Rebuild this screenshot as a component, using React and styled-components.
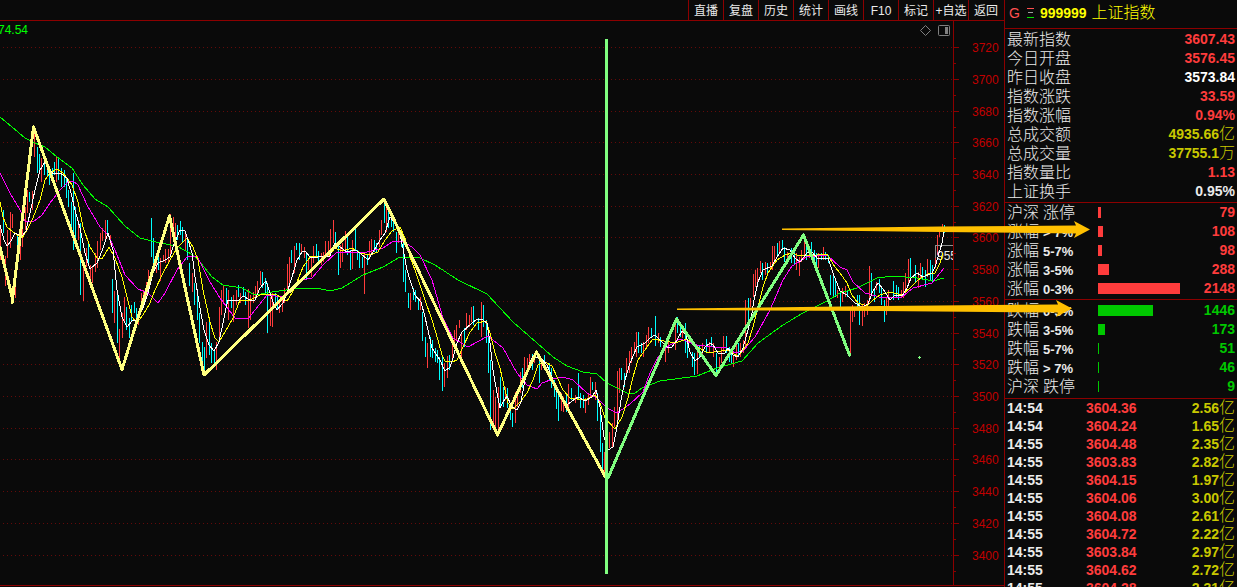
import styled, { createGlobalStyle } from "styled-components";

const sans = `"Liberation Sans", "Noto Sans CJK SC", sans-serif`;

const colors = {
  bg: "#0a0a0a",
  line: "#8c0000",
  grid: "#640a0a",
  axis: "#c00000",
  red: "#ff3c3c",
  green: "#00c800",
  yellow: "#c8c800",
  white: "#ebebeb"
};

const GlobalStyle = createGlobalStyle`
  * {
    box-sizing: border-box;
  }
  body {
    margin: 0;
    background: ${colors.bg};
    font-family: ${sans};
  }
`;

const Screen = styled.div`
  position: relative;
  display: flex;
  height: 100vh;
  overflow: hidden;
`;

const Main = styled.main`
  flex: 1;
  min-width: 0;
`;

const Toolbar = styled.nav`
  display: flex;
  justify-content: flex-end;
  padding-right: 1px;
  border-bottom: 1px solid ${colors.line};
`;

const ToolButton = styled.button`
  width: 35px;
  height: 20px;
  padding: 2px 0 0;
  border: 0;
  border-left: 1px solid ${colors.line};
  background: none;
  color: ${colors.white};
  font-family: ${sans};
  font-size: 12px;
  line-height: 18px;
  white-space: nowrap;
`;

const ChartSvg = styled.svg`
  display: block;
  width: 100%;
  font-family: ${sans};
  font-size: 12px;
`;

const Side = styled.aside`
  width: 233px;
  flex: none;
  overflow: hidden;
  border-left: 1px solid ${colors.line};
`;

const Header = styled.header`
  display: flex;
  align-items: center;
  gap: 5px;
  height: 28px;
  padding: 0 0 2px 4px;
  color: #ffff00;
  font-size: 14px;
`;

const Flag = styled.span`
  color: #ff5050;
`;

const Code = styled.strong`
  font-weight: bold;
`;

const Name = styled.h1`
  margin: 0;
  font-size: 16px;
  font-weight: 300;
  line-height: 18px;
`;

const Section = styled.section`
  padding: ${p => p.$pad || "0"};
  border-top: 1px solid ${colors.line};
`;

const Table = styled.table`
  width: 100%;
  table-layout: fixed;
  border-spacing: 0;
  color: ${colors.white};
  font-size: 14px;
  line-height: ${p => p.$row}px;

  th,
  td {
    height: ${p => p.$row}px;
    padding: 0;
    white-space: nowrap;
  }
`;

const Label = styled.th`
  width: ${p => p.$width};
  && {
    padding-left: 2px;
  }
  font-size: 16px;
  font-weight: 300;
  text-align: left;
`;

const Range = styled.span`
  margin-left: 4px;
  font-size: ${p => (p.$cjk ? 16 : 13)}px;
  font-weight: ${p => (p.$cjk ? 300 : "bold")};
  line-height: 1;
`;

const Time = styled.td`
  width: 81px;
  && {
    padding-left: 2px;
  }
  font-weight: bold;
`;

const Value = styled.td`
  && {
    padding-right: 2px;
  }
  color: ${p => p.$color};
  font-weight: bold;
  text-align: ${p => p.$align || "right"};
`;

const Unit = styled.span`
  font-size: 16px;
  font-weight: 300;
  line-height: 1;
`;

const BarCell = styled.td`
  width: 84px;
`;

const Bar = styled.div`
  height: 11px;
  background: ${p => p.$color};
`;

const Annotations = styled.svg`
  position: absolute;
  top: 0;
  left: 0;
  width: 100%;
  pointer-events: none;
`;

const tools = ["直播", "复盘", "历史", "统计", "画线", "F10", "标记", "+自选", "返回"];

const quotes = [
  ["最新指数", "3607.43", colors.red],
  ["今日开盘", "3576.45", colors.red],
  ["昨日收盘", "3573.84", "#ffffff"],
  ["指数涨跌", "33.59", colors.red],
  ["指数涨幅", "0.94%", colors.red],
  ["总成交额", "4935.66", colors.yellow, "亿"],
  ["总成交量", "37755.1", colors.yellow, "万"],
  ["指数量比", "1.13", colors.red],
  ["上证换手", "0.95%", colors.white]
];

// label, range, count, bar width
const rising = [
  ["沪深", "涨停", 79, 3],
  ["涨幅", "> 7%", 108, 5],
  ["涨幅", "5-7%", 98, 4],
  ["涨幅", "3-5%", 288, 11],
  ["涨幅", "0-3%", 2148, 82]
];

const falling = [
  ["跌幅", "0-3%", 1446, 55],
  ["跌幅", "3-5%", 173, 7],
  ["跌幅", "5-7%", 51, 1],
  ["跌幅", "> 7%", 46, 1],
  ["沪深", "跌停", 9, 1]
];

const ticks = [
  ["14:54", "3604.36", "2.56"],
  ["14:54", "3604.24", "1.65"],
  ["14:55", "3604.48", "2.35"],
  ["14:55", "3603.83", "2.82"],
  ["14:55", "3604.15", "1.97"],
  ["14:55", "3604.06", "3.00"],
  ["14:55", "3604.08", "2.61"],
  ["14:55", "3604.72", "2.22"],
  ["14:55", "3603.84", "2.97"],
  ["14:55", "3604.62", "2.72"],
  ["14:55", "3604.28", "2.31"]
];

const gridYs = [47, 79, 111, 142, 174, 206, 237, 269, 301, 333, 364, 396, 428, 459, 491, 523, 555];

// x,high,low
const upBars =
  "0,227,260 5,256,286 7,230,258 10,212,248 12,214,228 15,268,298 20,227,260 22,222,247 25,207,230 27,190,213 32,191,210 34,133,157 41,158,182 56,156,182 78,220,240 83,265,301 86,248,267 90,265,280 92,267,283 95,253,272 97,241,268 100,233,250 102,228,241 105,220,240 110,235,245 114,291,323 119,329,358 122,313,338 124,297,322 138,312,325 141,293,310 143,290,303 146,282,298 148,270,283 156,257,273 160,258,281 163,255,262 165,249,263 168,249,263 170,214,255 173,217,237 175,223,243 185,232,250 192,273,292 206,322,358 216,342,370 219,307,340 " +
  "221,290,315 223,286,303 228,290,320 233,295,322 236,290,305 240,293,303 248,289,328 250,295,320 253,292,303 255,286,300 257,281,295 260,271,285 270,297,326 272,293,327 279,300,313 282,297,312 284,288,303 287,264,295 289,257,287 294,246,273 301,244,252 304,247,258 308,258,270 311,257,277 313,246,263 321,253,265 323,252,262 325,241,257 328,241,257 330,229,252 333,220,243 340,245,268 342,243,262 345,231,250 352,240,269 364,253,294 369,241,258 371,239,255 379,230,247 381,220,235 386,207,232 398,228,243 " +
  "410,293,310 420,297,310 427,343,368 444,363,387 447,356,378 452,337,360 454,330,347 456,325,340 459,320,328 461,332,357 466,313,330 469,315,327 471,307,322 481,302,337 493,390,427 495,397,427 498,387,433 505,387,400 515,392,423 517,390,407 520,372,393 524,357,380 527,358,373 529,354,367 534,353,363 541,360,370 561,393,411 563,397,412 568,384,407 575,395,403 585,398,413 588,393,405 590,377,397 595,382,400 604,452,476 609,432,448 612,423,447 614,407,427 617,371,423 619,368,393 626,358,377 629,351,373 " +
  "631,347,363 634,342,353 636,332,357 643,342,357 646,335,348 648,327,343 658,333,343 665,343,362 668,342,353 675,320,350 682,325,338 697,350,374 702,343,357 709,342,353 713,343,357 719,357,373 721,347,363 723,336,352 733,355,367 736,343,360 740,343,357 743,340,353 745,300,347 750,298,307 753,274,297 755,270,287 757,268,285 760,261,273 765,262,275 770,262,268 772,246,270 774,246,263 779,241,253 787,252,263 796,253,270 799,257,276 801,250,262 804,237,258 809,248,258 818,253,268 823,247,260 837,290,298 842,288,302 845,286,297 " +
  "850,310,355 852,305,322 854,307,317 862,305,326 864,303,317 867,300,315 869,266,302 876,282,290 886,298,315 888,290,307 901,290,298 903,282,298 905,273,290 908,259,285 918,272,288 920,263,278 927,259,277 935,245,268 937,235,255 939,227,237 942,224,232";

const downBars =
  "3,210,233 17,235,270 29,192,202 37,147,173 39,154,170 44,158,175 47,163,177 49,172,185 52,168,177 54,162,175 58,157,180 61,168,187 64,170,187 66,178,198 68,190,207 71,202,232 73,173,250 75,207,247 80,223,295 88,243,263 107,220,235 112,279,313 117,293,343 126,307,330 129,318,338 131,305,322 134,302,313 136,308,323 151,218,257 153,238,263 158,250,270 177,225,240 180,221,235 182,227,242 187,237,260 189,263,286 194,283,305 197,292,320 199,313,343 202,342,370 204,347,372 209,322,355 211,343,363 214,350,363 " +
  "226,288,305 231,297,308 238,285,297 243,287,297 245,292,305 262,272,288 265,278,295 267,283,333 275,293,305 277,297,310 291,250,263 296,243,250 299,243,260 306,253,280 316,244,258 318,251,262 335,232,245 338,243,275 347,237,255 350,250,270 355,229,250 357,250,260 359,252,268 362,257,268 367,255,265 374,240,252 376,243,253 384,200,223 388,212,228 391,217,227 393,217,232 396,232,253 401,235,247 403,242,282 405,270,292 408,293,308 413,288,300 415,290,302 418,300,310 " +
  "422,312,341 425,337,357 430,337,357 432,340,358 435,348,362 437,350,363 439,357,380 442,357,391 449,355,370 464,328,347 473,306,325 478,318,330 483,305,327 486,320,343 488,327,373 490,360,430 500,377,407 503,387,407 507,388,408 510,405,420 512,413,427 522,368,388 532,354,370 539,360,383 544,355,370 549,363,380 551,368,388 554,380,397 556,387,409 558,393,421 566,395,412 571,388,400 578,373,400 580,393,408 583,395,408 592,382,390 597,393,421 600,413,452 602,443,470 621,368,380 624,373,387 " +
  "638,332,353 641,343,353 651,328,338 655,316,346 660,337,347 677,317,333 680,325,337 685,323,353 687,343,358 692,352,367 694,353,375 699,345,357 706,339,353 711,337,347 716,353,373 726,336,353 729,347,362 731,350,363 738,343,357 748,298,323 762,263,280 767,263,273 777,243,257 782,240,250 784,247,262 791,248,263 794,252,265 806,240,260 811,242,260 814,250,262 816,253,267 821,253,260 825,252,260 828,255,263 830,275,295 833,275,297 835,278,297 840,292,307 847,290,297 " +
  "857,295,310 859,295,325 871,273,293 874,290,302 879,279,293 881,287,305 884,300,322 893,281,300 896,285,298 898,287,300 910,258,280 915,265,282 922,267,280 925,270,287 930,260,280 932,265,282 944,225,233";

const averages = [
  {
    color: "#00ff00",
    points:
      "0,117 12,127 25,138 35,143 45,147 57,157 72,168 83,185 95,199 108,207 125,226 140,238 160,243 177,246 193,255 200,262 212,277 223,285 242,288 255,295 272,292 300,288 317,288 330,291 342,288 363,275 383,267 400,257 420,258 435,265 458,280 487,294 513,322 537,343 553,357 567,366 583,372 597,374 607,383 627,393 635,393 642,388 660,381 697,376 717,368 742,361 758,343 783,325 803,313 827,301 840,293 857,288 877,278 893,276 917,278 933,281 944,278"
  },
  {
    color: "#ff00ff",
    points:
      "0,173 10,193 20,210 25,221 33,222 42,215 50,203 60,190 68,182 73,181 78,185 87,205 100,227 108,235 115,250 125,275 138,289 148,293 158,303 165,293 177,270 187,257 197,256 200,262 210,282 220,298 235,318 248,319 255,310 267,295 283,297 293,288 302,280 312,278 323,265 337,252 357,252 367,252 383,248 392,242 402,241 412,247 420,255 432,280 443,318 453,338 468,347 488,336 503,348 517,373 527,385 537,389 542,383 553,379 563,377 573,380 587,393 597,398 607,408 617,413 630,404 643,392 650,373 658,357 667,347 680,339 697,345 713,347 727,348 735,353 743,351 755,337 770,310 783,280 792,266 807,257 827,255 840,267 847,270 853,282 865,293 883,298 902,297 913,288 932,283 944,268"
  },
  {
    color: "#ffff00",
    points:
      "0,202 3,217 7,227 13,232 22,238 27,230 33,218 40,200 45,180 50,173 57,169 63,173 72,185 78,202 83,227 90,247 97,258 102,259 109,247 115,258 122,277 127,297 132,317 137,323 143,315 150,303 155,290 163,273 170,260 177,248 187,238 193,247 198,260 203,290 210,322 215,338 219,342 225,332 233,318 240,300 250,300 260,295 275,294 287,301 292,293 297,282 303,267 310,257 320,256 328,257 335,248 342,251 352,248 360,253 370,255 378,252 385,240 392,231 400,227 405,238 410,257 415,270 425,300 432,320 438,340 442,355 445,361 452,362 457,360 463,347 470,332 477,323 486,321 490,333 495,353 500,368 505,390 508,403 513,409 520,402 527,393 533,380 538,365 545,362 552,366 557,377 563,390 570,398 585,400 595,395 600,403 605,418 615,429 622,417 628,398 633,377 638,360 647,347 653,339 675,343 687,339 697,347 708,353 727,350 738,356 743,350 748,343 753,327 758,307 763,287 768,273 777,260 785,255 792,253 800,256 817,255 827,254 835,267 840,273 847,283 852,295 858,303 867,306 873,300 880,295 890,292 902,295 910,288 918,280 928,274 935,273 940,263 943,253"
  },
  {
    color: "#ffffff",
    points:
      "0,225 4,240 7,246 11,241 15,233 22,236 26,231 30,213 35,190 40,170 45,162 49,168 53,174 60,173 67,178 71,193 75,210 80,228 85,253 90,269 97,263 102,251 108,233 113,250 117,290 122,317 127,327 132,321 137,320 143,308 148,293 153,273 158,263 165,260 170,257 173,247 177,237 180,230 185,231 188,240 192,253 195,277 200,308 204,330 209,345 214,351 219,342 223,323 226,308 228,300 238,301 243,296 250,300 255,300 260,288 266,281 270,293 274,305 277,310 283,303 287,293 292,277 297,260 302,252 305,251 310,257 318,257 330,256 335,243 340,247 347,252 355,250 360,253 368,260 373,252 380,240 385,233 390,217 395,223 400,235 403,248 407,270 410,280 415,295 421,302 425,317 432,348 440,360 445,371 450,367 453,358 457,343 462,332 472,323 477,319 483,320 487,323 490,343 493,370 497,393 500,408 503,402 507,396 512,407 517,410 521,402 525,380 530,362 533,356 542,359 547,365 552,377 557,392 562,397 567,405 572,401 578,397 585,401 592,397 596,390 600,407 604,437 608,450 613,447 617,427 621,400 625,380 630,363 637,347 645,343 650,338 655,335 660,340 667,347 672,347 677,340 682,331 686,335 690,352 695,361 700,357 705,347 710,343 713,345 718,353 725,353 728,348 733,355 738,357 743,348 748,330 752,313 754,300 758,282 763,270 772,266 777,257 783,248 790,250 795,258 800,262 807,253 812,252 818,259 828,258 833,273 840,291 847,295 855,303 862,307 868,304 872,293 878,283 883,289 890,300 895,295 902,296 907,288 911,278 917,273 923,277 932,273 935,267 938,257 942,243 944,232"
  }
];

const barPath = bars =>
  bars
    .split(" ")
    .map(bar => {
      const [x, high, low] = bar.split(",");
      return `M${x}.5 ${high}V${low}`;
    })
    .join("");

const Chart = () => (
  <ChartSvg viewBox="0 21 1004 566" role="img" aria-label="上证指数">
    <g shapeRendering="crispEdges" fill="none">
      {gridYs.map(y => (
        <path key={y} d={`M3 ${y}.5H953`} stroke={colors.grid} strokeDasharray="1 3" />
      ))}
      <path
        d={"M953.5 21V585M0 585.5H1004" + gridYs.map(y => `M954 ${y}.5h5M954 ${y + 16}.5h2`).join("")}
        stroke={colors.line}
      />
      <path d={barPath(upBars)} stroke={colors.red} />
      <path d={barPath(downBars)} stroke="#00ffff" />
      <path d="M935.5 258V245.5H953" stroke="#909090" />
    </g>
    <svg x="0" y="21" width="953" height="565" viewBox="0 21 953 565">
      <text x="937" y="260" fill={colors.white}>
        955
      </text>
      <text x="-2" y="34" fill="#00ff00">
        74.54
      </text>
    </svg>
    <g shapeRendering="crispEdges" fill="none">
      {averages.map(({ color, points }) => (
        <polyline key={color} points={points} stroke={color} />
      ))}
    </g>
    <g fill={colors.axis}>
      {gridYs.map((y, i) => (
        <text key={y} x="972" y={y + 5}>
          {3720 - i * 20}
        </text>
      ))}
    </g>
    <g fill="none" stroke="#808080">
      <path d="M925.5 25.5L930.5 30.5L925.5 35.5L920.5 30.5Z" />
      <rect x="938.5" y="25.5" width="11" height="10" rx="1" />
      <rect x="945" y="27" width="3" height="7" fill="#808080" stroke="none" />
    </g>
    <g
      fill="none"
      shapeRendering="crispEdges"
      strokeWidth="3"
      strokeLinejoin="round"
      strokeLinecap="round"
    >
      <path
        d="M0 247L13 301M12 303L33.5 127L122 369.5L169.5 216L204 375L384 199L497.5 435L536.5 352L606 478"
        stroke="#ffff80"
      />
      <path
        d="M606.5 40V573M608 478L676.5 319L716 375.5L803.5 235L849.5 355"
        stroke="#80ff80"
      />
    </g>
    <path d="M918 357.5h3M919.5 356v3" stroke="#80ff80" />
  </ChartSvg>
);

const Breadth = ({ rows, color }) => (
  <Table $row={19}>
    <tbody>
      {rows.map(([label, range, count, width]) => (
        <tr key={label + range}>
          <Label $width="93px" scope="row">
            {label}
            <Range $cjk={range.endsWith("停")}>{range}</Range>
          </Label>
          <BarCell>
            <Bar $color={color} style={{ width }} />
          </BarCell>
          <Value $color={color}>{count}</Value>
        </tr>
      ))}
    </tbody>
  </Table>
);

const App = () => (
  <Screen>
    <GlobalStyle />
    <Main>
      <Toolbar>
        {tools.map(tool => (
          <ToolButton key={tool} type="button">
            {tool}
          </ToolButton>
        ))}
      </Toolbar>
      <Chart />
    </Main>
    <Side>
      <Header>
        <Flag>G</Flag>
        <svg width="10" height="12" fill="none" aria-hidden="true">
          <path d="M2 1.5h7" stroke="#ff5050" />
          <path d="M3 5.5h5" stroke="#a0a0a0" />
          <path d="M2 10.5h7" stroke="#00e600" />
        </svg>
        <Code>999999</Code>
        <Name>上证指数</Name>
      </Header>
      <Section $pad="1px 0">
        <Table $row={19}>
          <tbody>
            {quotes.map(([label, value, color, unit]) => (
              <tr key={label}>
                <Label $width="50%" scope="row">
                  {label}
                </Label>
                <Value $color={color}>
                  {value}
                  {unit && <Unit>{unit}</Unit>}
                </Value>
              </tr>
            ))}
          </tbody>
        </Table>
      </Section>
      <Section $pad="0 0 1px">
        <Breadth rows={rising} color={colors.red} />
      </Section>
      <Section $pad="1px 0 2px">
        <Breadth rows={falling} color={colors.green} />
      </Section>
      <Section>
        <Table $row={18}>
          <tbody>
            {ticks.map(([time, price, volume], i) => (
              <tr key={i}>
                <Time>{time}</Time>
                <Value $color={colors.red} $align="left">
                  {price}
                </Value>
                <Value $color={colors.yellow}>
                  {volume}
                  <Unit>亿</Unit>
                </Value>
              </tr>
            ))}
          </tbody>
        </Table>
      </Section>
    </Side>
    <Annotations viewBox="0 0 1237 587" fill="#ffc000" aria-hidden="true">
      <path d="M782 228.5L940 226.5L1076 225.5L1074 221L1090 229.5L1074 238L1076 233.5L940 232L782 230Z" />
      <path d="M677 308.5L880 306L1058 304.5L1056 300L1072 308.5L1056 317L1058 312.5L880 311L677 310Z" />
    </Annotations>
  </Screen>
);

export default App;
